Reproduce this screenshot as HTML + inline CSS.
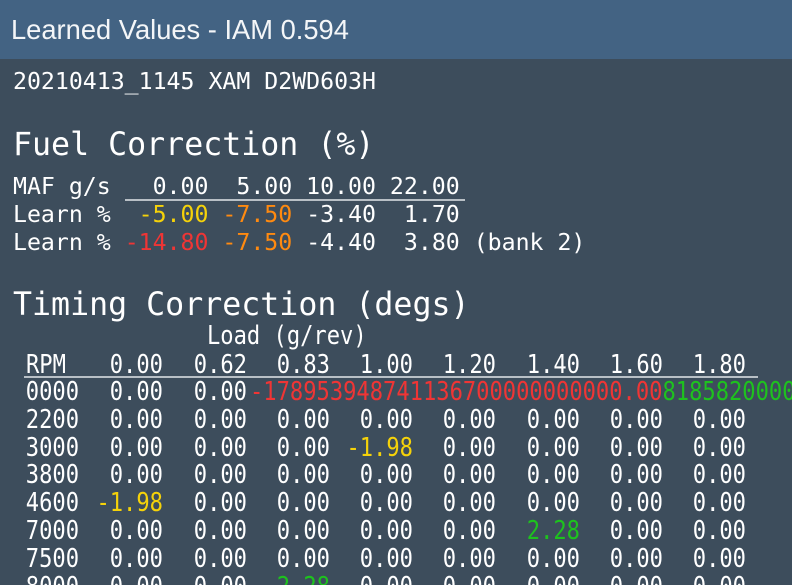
<!DOCTYPE html>
<html><head><meta charset="utf-8"><style>
*{margin:0;padding:0}
html,body{overflow:hidden}
body{width:792px;height:585px;overflow:hidden;background:#3d4d5c;color:#fff;position:relative;font-family:"DejaVu Sans Mono","Liberation Mono",monospace}
.hdr{position:absolute;left:0;top:0;width:792px;height:59px;background:#436383}
.hdr div{position:absolute;left:11px;top:14px;font-family:"Liberation Sans","DejaVu Sans",sans-serif;font-size:27.3px;color:#f4f6f8}
.m{position:absolute;left:13px;font-size:23.2px;line-height:28px;white-space:pre}
.t{position:absolute;left:13px;font-size:31.6px;line-height:36px;white-space:pre}
.y{color:#f5d20a}.o{color:#ff8a10}.r{color:#ef3535}.g{color:#1ec21e}
.ln{position:absolute;height:2px;background:#b9c0c6}
.cw{position:absolute;left:0;top:0;width:931px;transform:scaleX(0.85);transform-origin:0 0}
.c{position:absolute;font-size:26px;line-height:28px;white-space:pre;text-align:right;width:100px}
.cl{position:absolute;font-size:26px;line-height:28px;white-space:pre}
</style></head><body>
<div class="hdr"><div>Learned Values - IAM 0.594</div></div>
<div class="m" style="top:68px">20210413_1145 XAM D2WD603H</div>
<div class="t" style="top:127px">Fuel Correction (%)</div>
<div class="m" style="top:173px">MAF g/s   0.00  5.00 10.00 22.00</div>
<div class="ln" style="left:125px;top:199px;width:340px"></div>
<div class="m" style="top:201px">Learn %  <span class="y">-5.00</span> <span class="o">-7.50</span> -3.40  1.70</div>
<div class="m" style="top:229px">Learn % <span class="r">-14.80</span> <span class="o">-7.50</span> -4.40  3.80 (bank 2)</div>
<div class="t" style="top:287px">Timing Correction (degs)</div>
<div class="ln" style="left:24px;top:376px;width:734px"></div>
<div class="cw" id="cw"></div>
<script>
var cw=document.getElementById('cw'),s=0.85,h='';
function L(x,y,t,c){h+='<div class="cl'+(c?' '+c:'')+'" style="left:'+(x/s)+'px;top:'+(y-14)+'px">'+t+'</div>';}
function R(x,y,t,c){h+='<div class="c'+(c?' '+c:'')+'" style="left:'+(x/s-100)+'px;top:'+(y-14)+'px">'+t+'</div>';}
var ends=[163,247,330,413,496,580,663,746];
L(207,336,'Load (g/rev)');
L(26,365,'RPM');
['0.00','0.62','0.83','1.00','1.20','1.40','1.60','1.80'].forEach(function(v,i){R(ends[i],365,v)});
var rows=['0000','2200','3000','3800','4600','7000','7500','8000'];
var sp={'2_3':['-1.98','y'],'4_0':['-1.98','y'],'5_5':['2.28','g'],'7_2':['2.28','g']};
rows.forEach(function(r,ri){
 var y=392+ri*27.8;
 R(79,y,r);
 if(ri==0){R(ends[0],y,'0.00');R(ends[1],y,'0.00');L(250,y,'<span class="r">-178953948741136700000000000.00</span><span class="g">818582000000</span>');return;}
 ends.forEach(function(e,ci){var k=sp[ri+'_'+ci];if(k)R(e,y,k[0],k[1]);else R(e,y,'0.00');});
});
cw.innerHTML=h;
</script>
</body></html>
